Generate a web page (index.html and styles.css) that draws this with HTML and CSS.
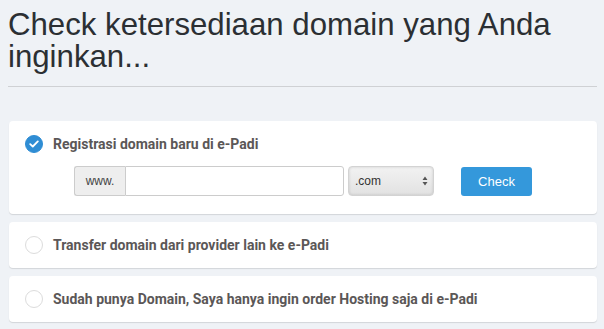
FILE: index.html
```html
<!DOCTYPE html>
<html lang="id">
<head>
    <meta charset="UTF-8">
    <meta name="viewport" content="width=device-width, initial-scale=1.0">
    <title>Check Domain</title>
    <link rel="stylesheet" href="styles.css">
</head>
<body>
    <div class="wrapper">
        <h1>Check ketersediaan domain yang Anda inginkan...</h1>
        <hr class="line">

        <div class="card">
            <div class="option">
                <span class="radio checked">
                    <svg width="10" height="8" viewBox="0 0 10 8"><path d="M1.2 4.1 L3.8 6.5 L8.8 1.4" fill="none" stroke="#fff" stroke-width="1.8" stroke-linecap="round" stroke-linejoin="round"/></svg>
                </span>
                <span class="label">Registrasi domain baru di e-Padi</span>
            </div>
            <div class="domain-form">
                <div class="input-group">
                    <span class="addon">www.</span>
                    <input type="text" class="domain-input">
                </div>
                <div class="select">
                    <span>.com</span>
                    <svg width="6" height="10" viewBox="0 0 6 10"><path d="M3 0.5 L5.5 4 L0.5 4 Z M3 9.5 L5.5 6 L0.5 6 Z" fill="#555"/></svg>
                </div>
                <button class="btn-check">Check</button>
            </div>
        </div>

        <div class="card">
            <div class="option">
                <span class="radio"></span>
                <span class="label">Transfer domain dari provider lain ke e-Padi</span>
            </div>
        </div>

        <div class="card">
            <div class="option">
                <span class="radio"></span>
                <span class="label">Sudah punya Domain, Saya hanya ingin order Hosting saja di e-Padi</span>
            </div>
        </div>
    </div>
</body>
</html>
```

FILE: styles.css
```css
body {
    margin: 0;
    background-color: #eff2f6;
    font-family: "Liberation Sans", Arial, sans-serif;
    color: #333;
}
.wrapper {
    padding: 9px 7px 0 8px;
}
h1 {
    font-size: 31.2px;
    font-weight: normal;
    line-height: 32px;
    margin: 0;
    color: #2b2f33;
    padding-right: 30px;
}
.line {
    border: none;
    border-top: 1px solid #cfd1d4;
    margin: 13px 0 34px 0;
}
.card {
    background: #fff;
    border-radius: 4px;
    box-shadow: 0 1px 1px rgba(0, 0, 0, 0.12);
    margin: 0 0 8px 1px;
    padding: 14px 16px 14px 16px;
}
.option {
    display: flex;
    align-items: center;
    height: 18px;
}
.radio {
    width: 18px;
    height: 18px;
    border-radius: 50%;
    border: 1px solid #dcdcdc;
    box-sizing: border-box;
    margin-right: 10px;
    display: flex;
    align-items: center;
    justify-content: center;
}
.radio.checked {
    background: #2f8dd4;
    border-color: #2f8dd4;
}
.label {
    font-family: Roboto, sans-serif;
    font-weight: bold;
    font-size: 14px;
    color: #5b5757;
}
.domain-form {
    display: flex;
    align-items: center;
    margin: 13px 0 4px 49px;
}
.input-group {
    display: flex;
    height: 30px;
}
.addon {
    width: 51px;
    box-sizing: border-box;
    background: #eeeeee;
    border: 1px solid #cccccc;
    border-right: none;
    border-radius: 3px 0 0 3px;
    font-size: 12px;
    color: #444;
    display: flex;
    align-items: center;
    justify-content: center;
}
.domain-input {
    width: 219px;
    box-sizing: border-box;
    border: 1px solid #cccccc;
    border-radius: 0 3px 3px 0;
    margin: 0;
    padding: 0 8px;
}
.select {
    width: 86px;
    height: 30px;
    box-sizing: border-box;
    margin-left: 4px;
    border: 1px solid #d3d3d3;
    border-radius: 4px;
    background: linear-gradient(#f2f2f2, #e2e2e2);
    box-shadow: inset 0 0 3px rgba(0, 0, 0, 0.15);
    display: flex;
    align-items: center;
    justify-content: space-between;
    padding: 0 5px 0 6px;
    font-size: 12px;
    color: #333;
}
.btn-check {
    margin-left: 27px;
    width: 71px;
    height: 29px;
    border: none;
    border-radius: 3px;
    background: #3498db;
    color: #fff;
    font-family: "Liberation Sans", Arial, sans-serif;
    font-size: 13px;
    cursor: pointer;
}
```
